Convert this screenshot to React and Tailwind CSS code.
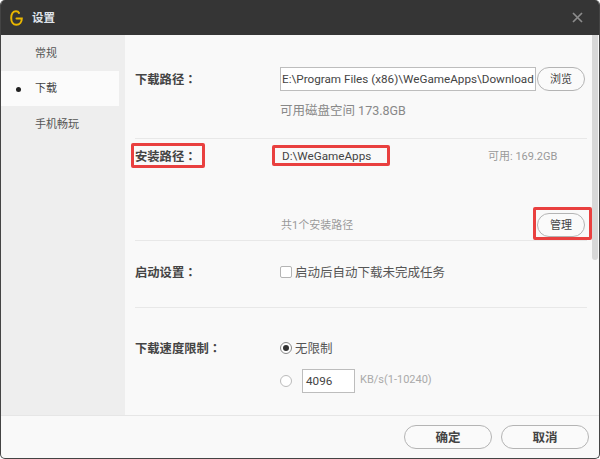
import React from 'react';

const Label = ({ children }) => (
    <div className="w-[145px] shrink-0 pt-[2px] text-[12.3px] font-bold text-[#444]">
        {children}
        <span className="font-['Noto_Sans_CJK_TC',sans-serif]">：</span>
    </div>
);

const PillButton = ({ children }) => (
    <button className="flex h-[24px] w-[48px] items-center justify-center rounded-full border border-[#b4b4b4] bg-[#fafafa] pt-[3px] text-[11px] text-[#444]">
        {children}
    </button>
);

const Divider = () => <div className="h-px w-[452px] bg-[#e8e8e8]" />;

const App = () => {
    return (
        <div className="h-[459px] w-[600px] overflow-hidden bg-white font-['Roboto','Noto_Sans_CJK_SC',sans-serif]">
            <div className="flex h-full flex-col overflow-hidden rounded-[5px] border-x border-b border-[#444] bg-[#f9f9f9]">
                {/* Title bar */}
                <div className="-mx-px flex h-[35px] shrink-0 items-center bg-[#353535] pl-[10px] pr-[17px]">
                    <svg width="13" height="16" viewBox="0 0 13 16" fill="none" stroke="#eab700" strokeWidth="2" strokeLinecap="round">
                        <path d="M9 3 C 8.4 1.6 7 1.2 6 1.2 C 3 1.2 1.2 4.2 1.2 8 C 1.2 12 3.2 14.8 6.3 14.8 C 9.8 14.8 11.8 12 11.8 8.4 L 6.5 8.4" />
                    </svg>
                    <span className="ml-[9px] pt-[2px] text-[11.5px] font-bold text-[#dfe3ea]">设置</span>
                    <svg className="ml-auto" width="11" height="11" viewBox="0 0 11 11" stroke="#8c8c8c" strokeWidth="1.7">
                        <path d="M1 1 L10 10 M10 1 L1 10" />
                    </svg>
                </div>

                <div className="flex min-h-0 flex-1">
                    {/* Sidebar */}
                    <div className="flex w-[124px] shrink-0 flex-col bg-[#eeeeee] text-[11px] text-[#555]">
                        <div className="flex h-[36px] items-center pl-[34px] pt-[2px]">常规</div>
                        <div className="relative flex h-[35px] w-[118px] items-center bg-[#fbfbfb] pl-[34px] pt-[2px] text-[#444]">
                            <span className="absolute left-[15px] h-[5px] w-[5px] rounded-full bg-[#222]" />
                            下载
                        </div>
                        <div className="flex h-[35px] items-center pl-[34px] pt-[4px]">手机畅玩</div>
                    </div>

                    {/* Content */}
                    <div className="relative min-w-0 flex-1 pl-[10px] pt-[32px]">
                        <div className="flex h-[23px] items-center">
                            <div className="pt-[1px]"><Label>下载路径</Label></div>
                            <div className="flex h-[24px] w-[256px] items-center border border-[#bdbdbd] bg-white pl-[1px] pt-[2px] text-[11.7px] whitespace-nowrap text-[#444]">
                                E:\Program Files (x86)\WeGameApps\Download
                            </div>
                            <div className="ml-[1px]"><PillButton>浏览</PillButton></div>
                        </div>
                        <div className="mt-[11px] ml-[145px] text-[12.5px] leading-[20px] text-[#888]">可用磁盘空间 173.8GB</div>
                        <div className="mt-[17px]"><Divider /></div>

                        <div className="relative mt-[7px] flex h-[20px] items-center">
                            <Label>安装路径</Label>
                            <div className="ml-[2px] pt-[2px] text-[11.7px] text-[#444]">D:\WeGameApps</div>
                            <div className="absolute left-[353px] pt-[2px] text-[11px] text-[#999]">可用: 169.2GB</div>
                            <span className="absolute left-[-4px] top-[-3px] h-[25px] w-[74px] rounded-[2px] border-[3px] border-[#e9403f]" />
                            <span className="absolute left-[137px] top-[-1px] h-[21px] w-[118px] rounded-[2px] border-[3px] border-[#e9403f]" />
                        </div>

                        <div className="relative mt-[47px] flex h-[23px] items-center">
                            <div className="ml-[146px] pt-[3px] text-[11px] text-[#999]">共1个安装路径</div>
                            <div className="absolute left-[402px]"><PillButton>管理</PillButton></div>
                            <span className="absolute left-[398px] top-[-6px] h-[33px] w-[59px] rounded-[2px] border-[3px] border-[#e9403f]" />
                        </div>
                        <div className="mt-[4px]"><Divider /></div>

                        <div className="mt-[22px] flex h-[18px] items-center">
                            <Label>启动设置</Label>
                            <span className="h-[12px] w-[12px] rounded-[2px] border border-[#b4b4b4] bg-white" />
                            <span className="ml-[3px] pt-[2px] text-[12.5px] text-[#555]">启动后自动下载未完成任务</span>
                        </div>
                        <div className="mt-[26px]"><Divider /></div>

                        <div className="mt-[31px] flex h-[18px] items-center">
                            <Label>下载速度限制</Label>
                            <span className="flex h-[12px] w-[12px] items-center justify-center rounded-full border border-[#888] bg-white">
                                <span className="h-[6px] w-[6px] rounded-full bg-[#333]" />
                            </span>
                            <span className="ml-[3px] pt-[2px] text-[12.5px] text-[#555]">无限制</span>
                        </div>
                        <div className="mt-[12px] flex h-[23px] items-center">
                            <div className="w-[145px] shrink-0" />
                            <span className="h-[12px] w-[12px] rounded-full border border-[#bbb] bg-white" />
                            <div className="ml-[10px] flex h-[24px] w-[53px] items-center border border-[#bdbdbd] bg-white pl-[3px] pt-[2px] text-[11.7px] text-[#444]">4096</div>
                            <span className="ml-[5px] text-[11px] text-[#aaa]">KB/s(1-10240)</span>
                        </div>

                        {/* Scrollbar */}
                        <div className="absolute right-[1px] top-0 h-[225px] w-[6px] rounded-b-[3px] bg-[#d8d8d8]" />
                    </div>
                </div>

                {/* Footer */}
                <div className="flex h-[43px] shrink-0 items-center justify-end gap-[9px] border-t border-[#e6e6e6] pr-[10px]">
                    <button className="flex h-[24px] w-[88px] items-center justify-center rounded-full border border-[#b4b4b4] bg-[#fafafa] pt-[2px] text-[12.5px] font-bold text-[#444]">确定</button>
                    <button className="flex h-[24px] w-[88px] items-center justify-center rounded-full border border-[#b4b4b4] bg-[#fafafa] pt-[2px] text-[12.5px] font-bold text-[#444]">取消</button>
                </div>
            </div>
        </div>
    );
};

export default App;
